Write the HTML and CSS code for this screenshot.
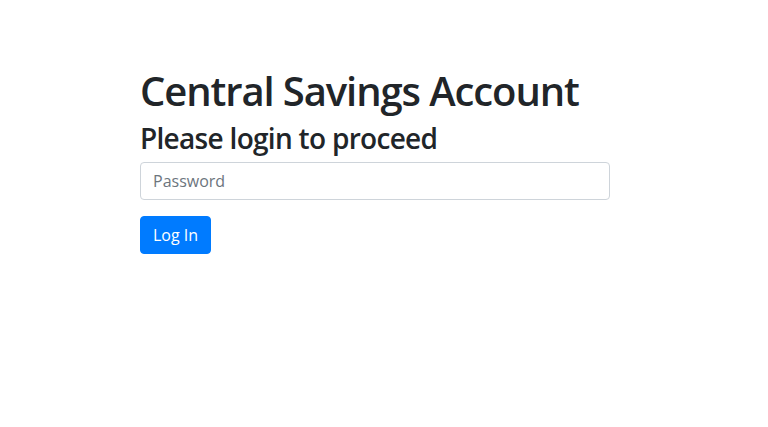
FILE: index.html
```html
<!DOCTYPE html>
<html lang="en">
<head>
<meta charset="utf-8">
<title>Central Savings Account</title>
<link rel="stylesheet" href="styles.css">
</head>
<body>
<main class="page">
  <h1 class="title">Central Savings Account</h1>
  <h3 class="subtitle">Please login to proceed</h3>
  <form class="login-form">
    <div class="form-group">
      <input class="form-control" type="password" placeholder="Password">
    </div>
    <button class="btn-primary" type="button">Log In</button>
  </form>
</main>
</body>
</html>
```

FILE: styles.css
```css
html, body {
  margin: 0;
  padding: 0;
  background: #fff;
}
body {
  font-family: "Open Sans", "Noto Sans", sans-serif;
  font-size: 16px;
  line-height: 1.5;
  color: #212529;
}
.page {
  width: 470px;
  margin-left: 140px;
  padding-top: 67px;
}
.title {
  margin: 0 0 7px 0;
  font-size: 40px;
  font-weight: 600;
  line-height: 1.2;
  letter-spacing: -1.1px;
}
.subtitle {
  margin: 0 0 6px 0;
  font-size: 28px;
  font-weight: 600;
  line-height: 1.2;
  letter-spacing: -0.7px;
}
.form-group {
  margin-bottom: 16px;
}
.form-control {
  display: block;
  box-sizing: border-box;
  width: 100%;
  height: 38px;
  padding: 6px 12px;
  font-family: inherit;
  font-size: 16px;
  line-height: 1.5;
  color: #495057;
  background: #fff;
  border: 1px solid #ced4da;
  border-radius: 4px;
  outline: none;
}
.form-control::placeholder {
  color: #6c757d;
  opacity: 1;
}
.btn-primary {
  display: inline-block;
  box-sizing: border-box;
  height: 38px;
  padding: 6px 12px;
  font-family: inherit;
  font-size: 16px;
  line-height: 1.5;
  color: #fff;
  background: #007bff;
  border: 1px solid #007bff;
  border-radius: 4px;
  cursor: pointer;
}
```
